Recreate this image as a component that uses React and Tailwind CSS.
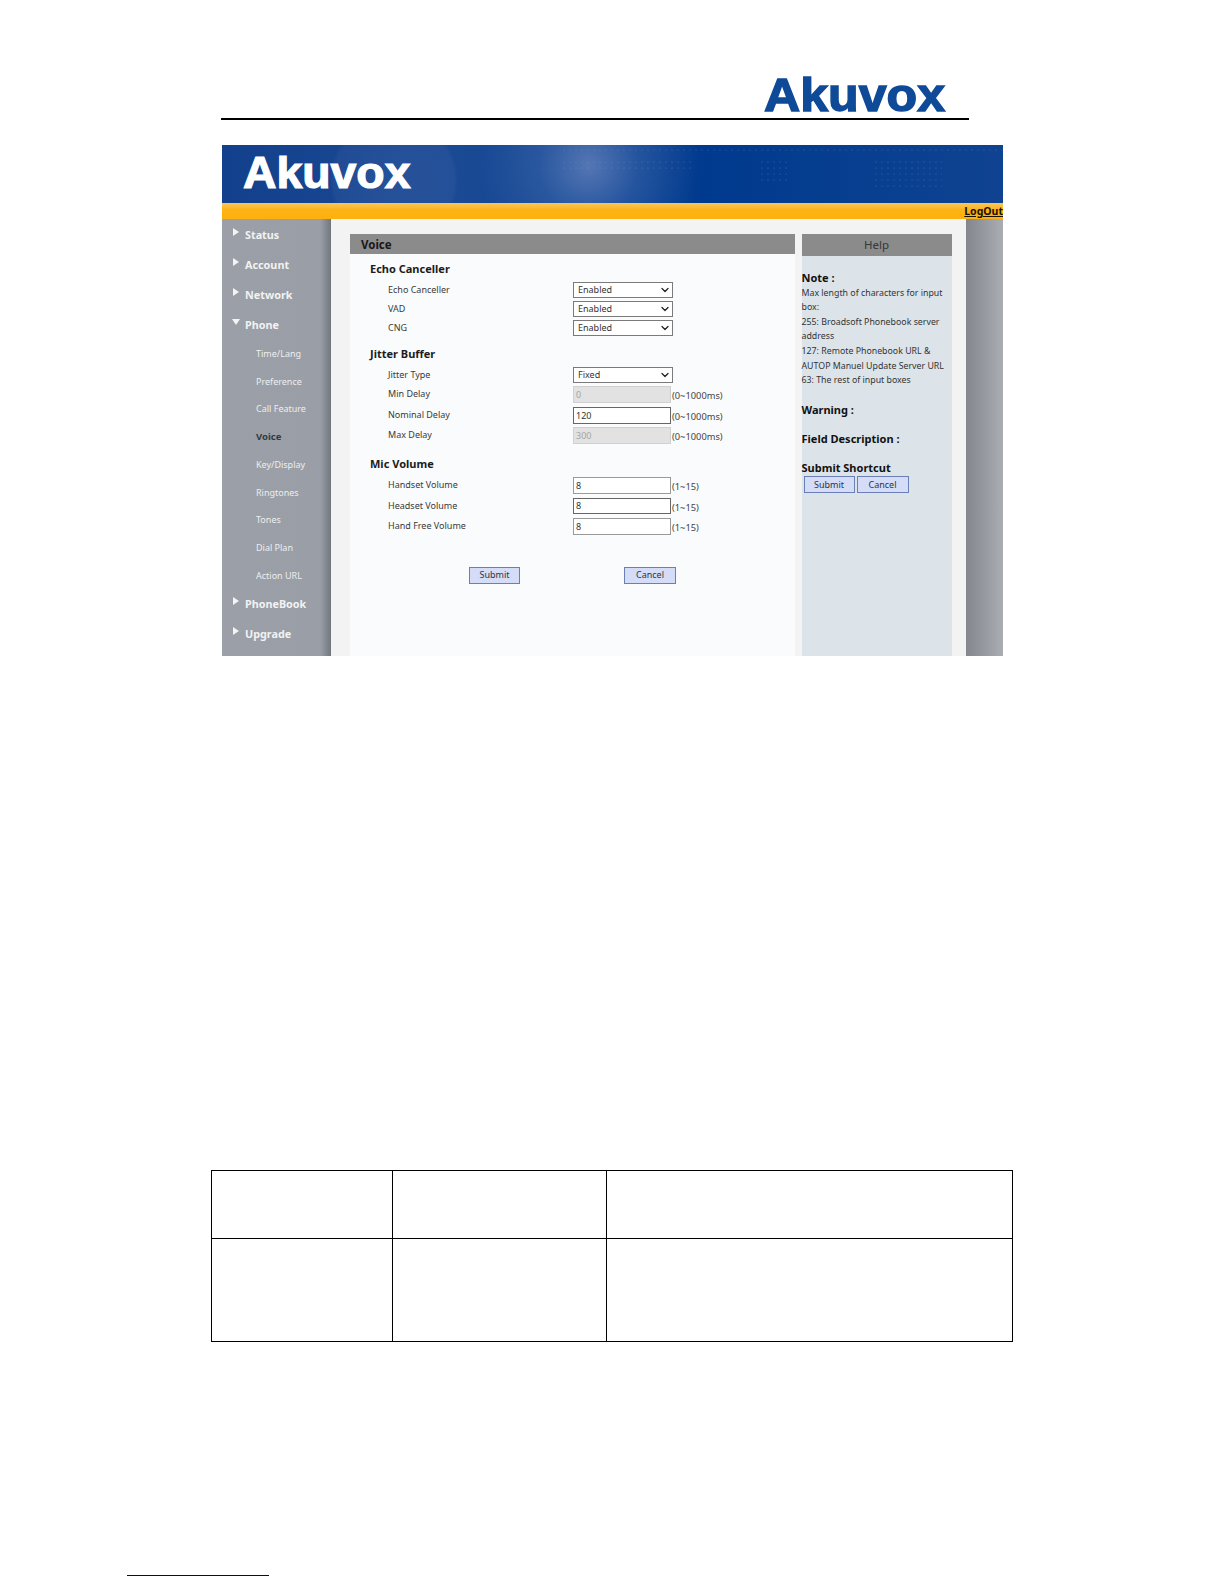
import { ChevronDown } from 'lucide-react'

const SIDE_FONT = "[font-family:'Noto_Sans',sans-serif]"

const TOP_NAV = ['Status', 'Account', 'Network']
const SUB_NAV = ['Time/Lang', 'Preference', 'Call Feature', 'Voice', 'Key/Display', 'Ringtones', 'Tones', 'Dial Plan', 'Action URL']

function Arrow({ down }) {
  return (
    <svg width="8" height="8" viewBox="0 0 8 8" className="absolute left-[10px] top-[8px]">
      <polygon points={down ? '0,1 8,1 4,7' : '1,0 7,4 1,8'} fill="#f4f4f4" />
    </svg>
  )
}

function NavItem({ label, down }) {
  return (
    <div className="relative h-[30px] pl-[23px] flex items-center text-[10.8px] font-bold text-[#f2f2f2]">
      <Arrow down={down} />
      {label}
    </div>
  )
}

function Sidebar() {
  return (
    <div className="w-[109px] pt-[1px] flex flex-col bg-gradient-to-r from-[#9b9fa7] via-[#9a9ea6] via-90% to-[#72767e]">
      {TOP_NAV.map(n => <NavItem key={n} label={n} />)}
      <NavItem label="Phone" down />
      <div className="flex flex-col">
        {SUB_NAV.map(n => (
          <div
            key={n}
            className={n === 'Voice'
              ? 'h-[27.7px] pl-[34px] flex items-center text-[9.5px] font-bold text-[#333a44]'
              : 'h-[27.7px] pl-[34px] flex items-center text-[9px] text-[#eceef0]'}
          >
            {n}
          </div>
        ))}
      </div>
      <NavItem label="PhoneBook" />
      <NavItem label="Upgrade" />
    </div>
  )
}

function Heading({ children, cls = 'h-[28px] pt-[3px]' }) {
  return <div className={`${cls} pl-[20px] flex items-center text-[11px] font-bold text-[#1c1c1c]`}>{children}</div>
}

function Label({ children }) {
  return <div className="w-[223px] h-[16px] pl-[38px] flex items-center text-[9px] text-[#3a3a3a]">{children}</div>
}

function SelectRow({ label, value }) {
  return (
    <div className="h-[19px] flex items-start">
      <Label>{label}</Label>
      <div className="relative w-[100px] h-[16px] border border-[#7a7a7a] bg-white flex items-center pl-[4px] text-[9px] text-[#333]">
        {value}
        <ChevronDown size={12} strokeWidth={2.5} className="absolute right-[1px] top-[1px] text-[#222]" />
      </div>
    </div>
  )
}

function InputRow({ label, value, hint, disabled, cls = 'h-[20.5px]', dark }) {
  const box = disabled
    ? 'border-[#d0d0d0] bg-[#e2e2e2] text-[#a5a5a5]'
    : dark ? 'border-[#666] bg-white text-[#333]' : 'border-[#9a9a9a] bg-white text-[#333]'
  return (
    <div className={`${cls} flex items-start`}>
      <Label>{label}</Label>
      <div className={`w-[98px] h-[16.5px] border ${box} flex items-center pl-[2px] text-[9px]`}>{value}</div>
      <div className="h-[16.5px] pt-[4px] pl-[1px] flex items-center text-[9.3px] text-[#444]">{hint}</div>
    </div>
  )
}

function PushButton({ children, cls = 'w-[51px]' }) {
  return (
    <div className={`${cls} h-[17px] border border-[#6a7fb5] bg-[#d4dcf7] flex items-center justify-center text-[9px] text-[#333]`}>
      {children}
    </div>
  )
}

function VoicePanel() {
  return (
    <div className="w-[444.5px] flex flex-col">
      <div className="h-[20px] pl-[11px] pt-[2px] bg-[#8b8b8b] flex items-center text-[11.5px] font-bold text-[#17181a]">Voice</div>
      <div className="flex-1 flex flex-col bg-[#f9fbfd]">
        <Heading>Echo Canceller</Heading>
        <SelectRow label="Echo Canceller" value="Enabled" />
        <SelectRow label="VAD" value="Enabled" />
        <SelectRow label="CNG" value="Enabled" />
        <Heading>Jitter Buffer</Heading>
        <SelectRow label="Jitter Type" value="Fixed" />
        <InputRow label="Min Delay" value="0" hint="(0~1000ms)" disabled cls="h-[21px]" />
        <InputRow label="Nominal Delay" value="120" hint="(0~1000ms)" cls="h-[20px]" dark />
        <InputRow label="Max Delay" value="300" hint="(0~1000ms)" disabled cls="h-[21px]" />
        <Heading cls="h-[29px] pt-[4px]">Mic Volume</Heading>
        <InputRow label="Handset Volume" value="8" hint="(1~15)" />
        <InputRow label="Headset Volume" value="8" hint="(1~15)" dark />
        <InputRow label="Hand Free Volume" value="8" hint="(1~15)" />
        <div className="mt-[28px] pl-[119px] flex gap-[104px]">
          <PushButton>Submit</PushButton>
          <PushButton cls="w-[52px]">Cancel</PushButton>
        </div>
      </div>
    </div>
  )
}

const NOTES = [
  'Max length of characters for input',
  'box:',
  '255: Broadsoft Phonebook server',
  'address',
  '127: Remote Phonebook URL &',
  'AUTOP Manuel Update Server URL',
  '63: The rest of input boxes',
]

function HelpPanel() {
  return (
    <div className="w-[150px] flex flex-col bg-[#dce4ea]">
      <div className="h-[22px] bg-[#8b8b8b] flex items-center justify-center text-[11.5px] text-[#33363a]">Help</div>
      <div className="pt-[15px] flex flex-col">
        <div className="h-[15px] flex items-center text-[11px] font-bold text-[#111]">Note :</div>
        <div className="flex flex-col">
          {NOTES.map(t => (
            <div key={t} className="h-[14.6px] flex items-center whitespace-nowrap text-[8.8px] text-[#333]">{t}</div>
          ))}
        </div>
        <div className="mt-[15px] h-[15px] flex items-center text-[11px] font-bold text-[#111]">Warning :</div>
        <div className="mt-[14px] h-[15px] flex items-center text-[11px] font-bold text-[#111]">Field Description :</div>
        <div className="mt-[14px] h-[15px] flex items-center text-[11px] font-bold text-[#111]">Submit Shortcut</div>
        <div className="pl-[2px] flex gap-[2px]">
          <PushButton>Submit</PushButton>
          <PushButton cls="w-[52px]">Cancel</PushButton>
        </div>
      </div>
    </div>
  )
}

function Banner() {
  return (
    <div className="relative h-[58px] overflow-hidden bg-[radial-gradient(circle_at_47%_35%,rgba(115,140,195,0.7)_0,rgba(70,110,175,0.45)_50px,transparent_110px),radial-gradient(circle_at_22%_60%,rgba(70,105,170,0.3)_0,rgba(70,105,170,0.2)_60px,transparent_64px),linear-gradient(90deg,#13408c_0%,#1b4a94_30%,#003a8e_62%,#0f4391_100%)]">
      <svg className="absolute left-[340px] top-[3px]" width="440" height="45">
        <defs>
          <pattern id="dots" width="6" height="6" patternUnits="userSpaceOnUse">
            <circle cx="2" cy="2" r="0.6" fill="#7f9ccb" fillOpacity="0.45" />
          </pattern>
        </defs>
        <rect x="0" y="0" width="440" height="4" fill="url(#dots)" />
        <rect x="0" y="12" width="130" height="12" fill="url(#dots)" />
        <rect x="195" y="12" width="30" height="25" fill="url(#dots)" />
        <rect x="310" y="12" width="70" height="30" fill="url(#dots)" />
      </svg>
      <div className="relative pl-[21px] pb-[4px] h-full flex items-center">
        <span className="origin-left scale-x-[1.03] [font-family:'Liberation_Sans',sans-serif] text-[45px] font-bold leading-none text-white [-webkit-text-stroke:1.2px_white]">
          Akuvox
        </span>
      </div>
    </div>
  )
}

function Screenshot() {
  return (
    <div className={`ml-[222px] mt-[25px] w-[781px] h-[511px] flex flex-col ${SIDE_FONT}`}>
      <Banner />
      <div className="h-[16px] flex items-center justify-end bg-gradient-to-b from-[#f7c757] via-[#fcb414] via-40% to-[#fdb00f] text-[10.5px] font-bold leading-none text-[#1a1000] underline">
        LogOut
      </div>
      <div className="flex-1 flex">
        <Sidebar />
        <div className="w-[635px] pt-[15px] pl-[19px] flex gap-[7px] bg-[#f3f3f3]">
          <VoicePanel />
          <HelpPanel />
        </div>
        <div className="flex-1 bg-gradient-to-r from-[#83868d] to-[#aaadb2]" />
      </div>
    </div>
  )
}

function DocTable() {
  return (
    <table className="ml-[211px] mt-[514px] w-[802px] h-[172px] table-fixed border-collapse">
      <colgroup>
        <col className="w-[181px]" />
        <col className="w-[214px]" />
        <col />
      </colgroup>
      <tbody>
        <tr className="h-[68px]">
          <td className="border border-black" />
          <td className="border border-black" />
          <td className="border border-black" />
        </tr>
        <tr>
          <td className="border border-black" />
          <td className="border border-black" />
          <td className="border border-black" />
        </tr>
      </tbody>
    </table>
  )
}

export default function App() {
  return (
    <div className="w-[1224px] h-[1584px] bg-white flex flex-col overflow-hidden">
      <div className="h-[118px] pl-[764px] flex items-end">
        <span className="origin-left scale-x-[1.09] [font-family:'Liberation_Sans',sans-serif] text-[46px] font-bold leading-none text-[#0f4a98] [-webkit-text-stroke:1.4px_#0f4a98]">
          Akuvox
        </span>
      </div>
      <div className="ml-[221px] w-[748px] h-[2px] bg-black" />
      <Screenshot />
      <DocTable />
      <div className="ml-[127px] mt-[233px] w-[142px] h-[1px] bg-[#000080]" />
    </div>
  )
}
